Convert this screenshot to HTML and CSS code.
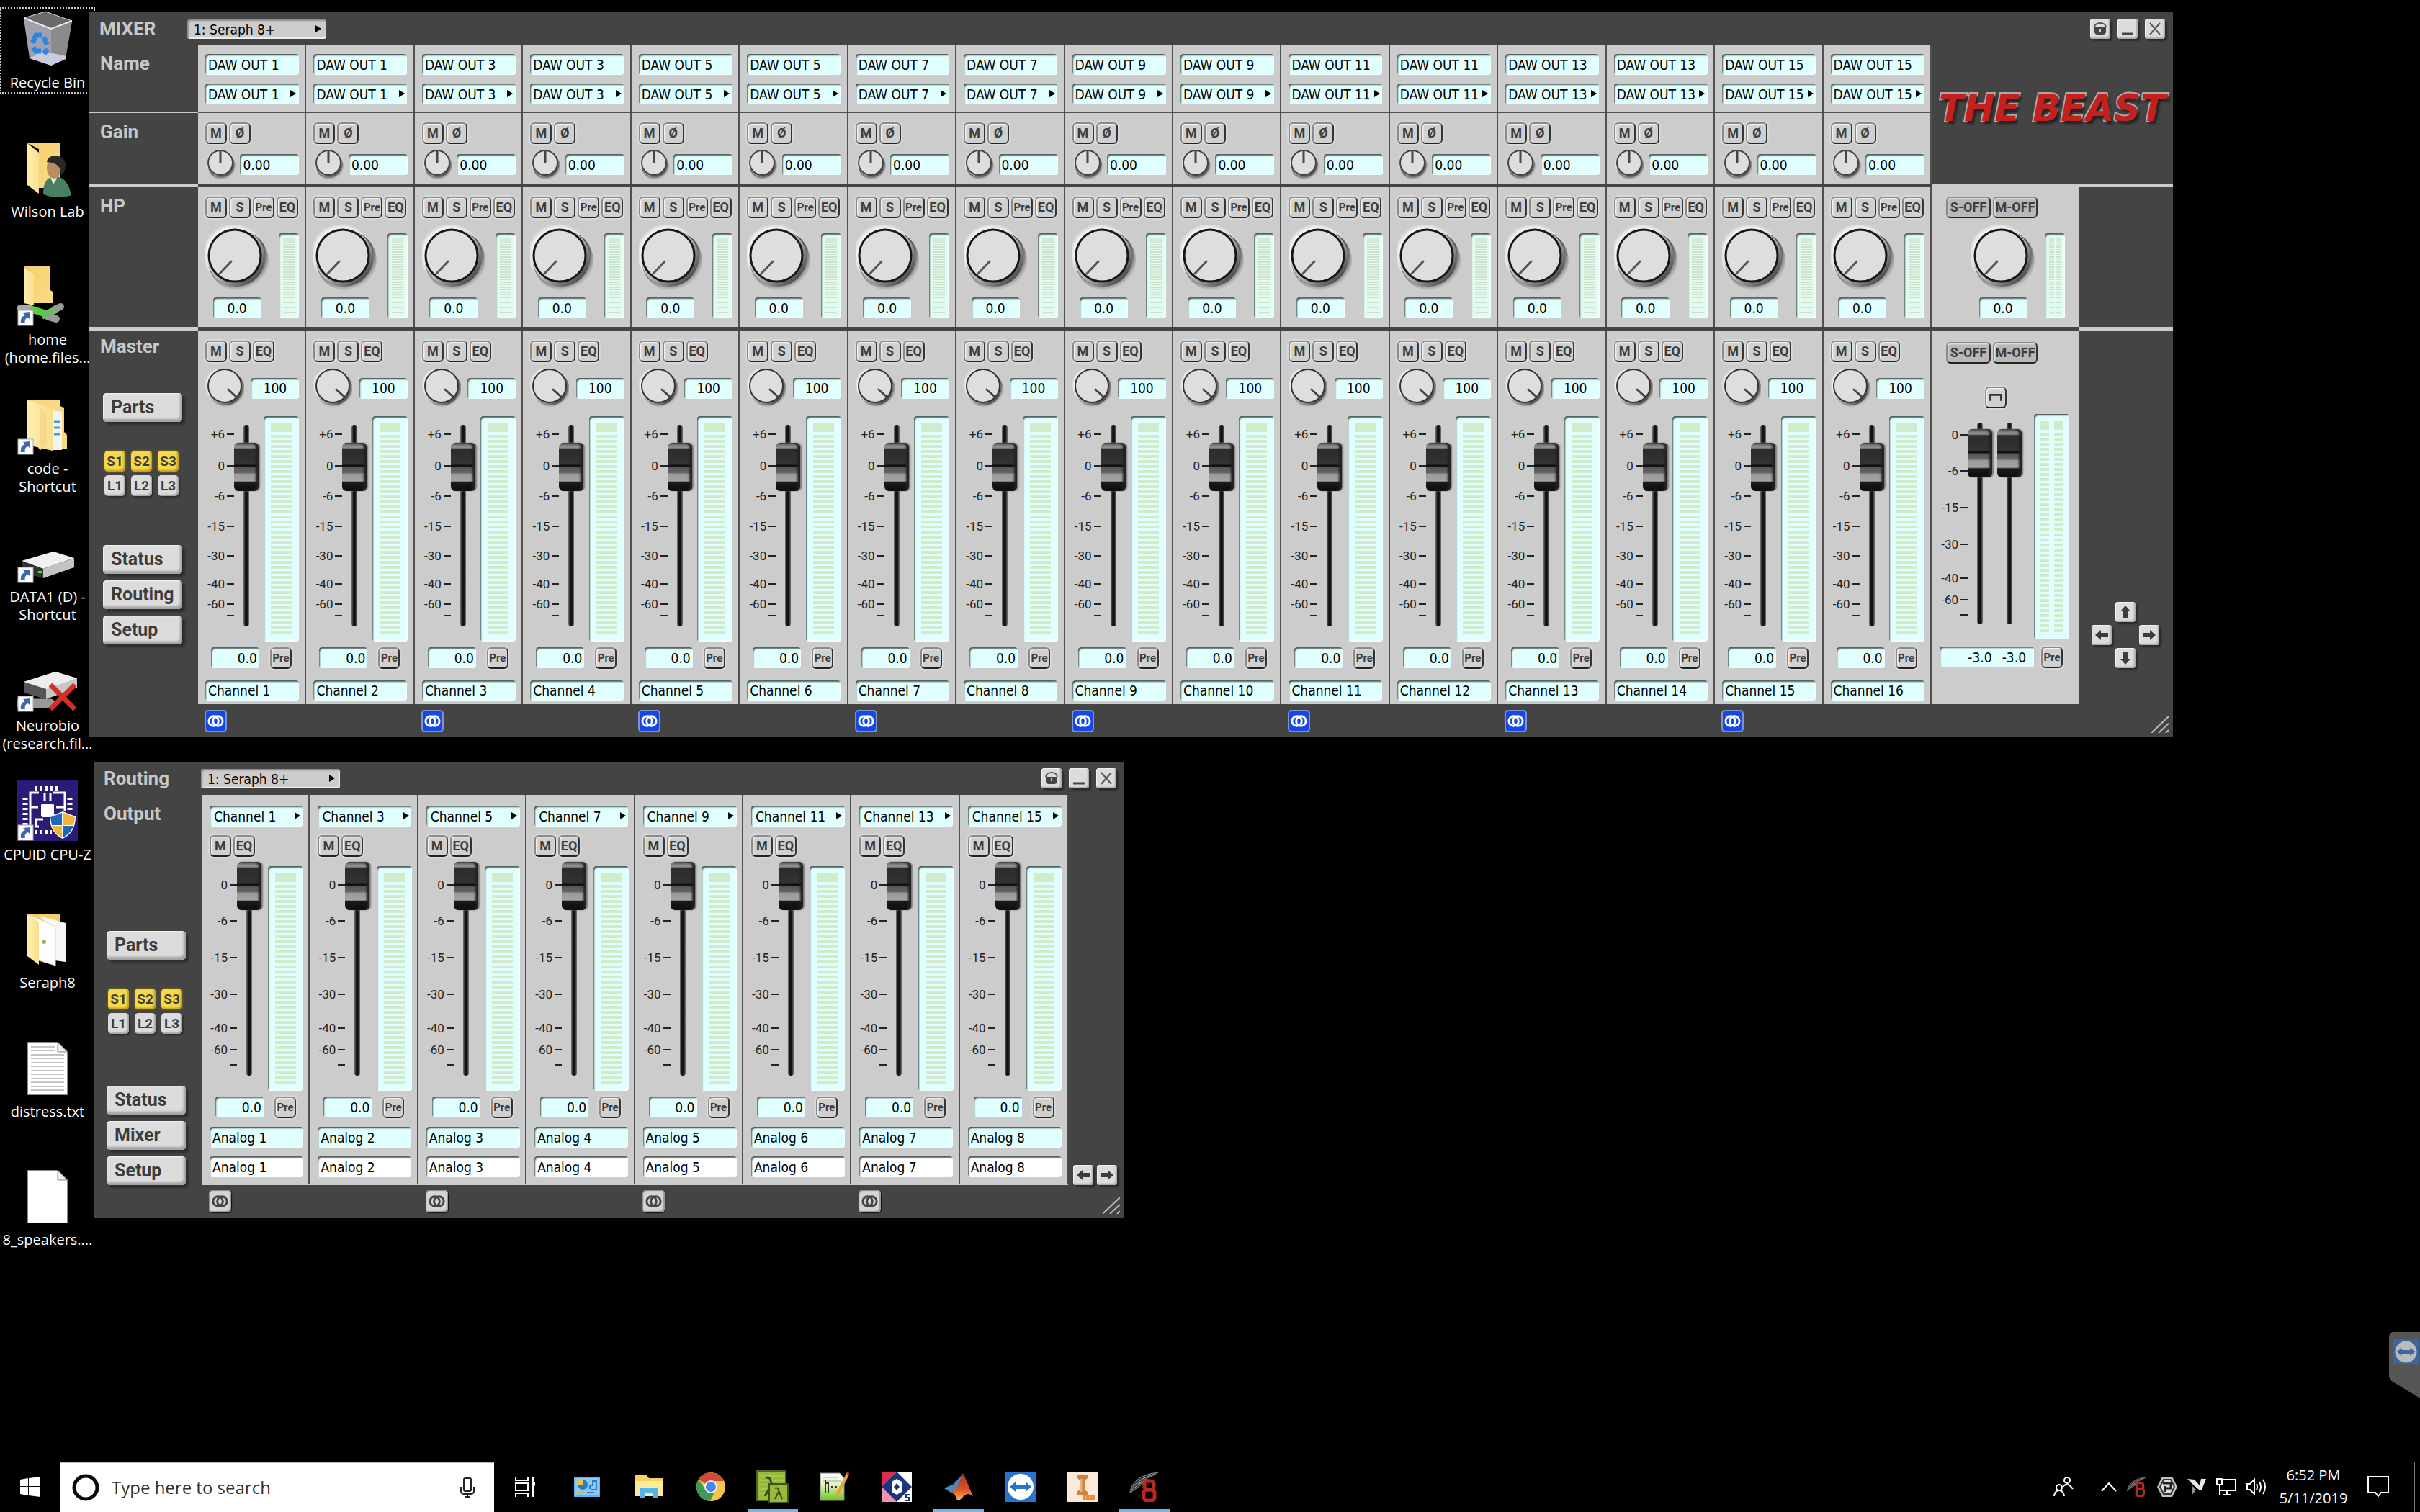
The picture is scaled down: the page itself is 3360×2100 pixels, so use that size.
FILE: index.html
```html
<!DOCTYPE html>
<html lang="en">
<head>
<meta charset="utf-8">
<title>Desktop</title>
<link rel="stylesheet" href="styles.css">
</head>
<body>
<svg class="defs" aria-hidden="true">
  <defs>
    <radialGradient id="gShade" cx=".45" cy=".4" r=".6"><stop offset=".75" stop-color="#333"/><stop offset="1" stop-color="#888" stop-opacity="0"/></radialGradient>
    <radialGradient id="gGlow"><stop offset=".85" stop-color="#f4f4f4"/><stop offset="1" stop-color="#f4f4f4" stop-opacity="0"/></radialGradient>
    <linearGradient id="gRim" x2="1" y2="1"><stop offset="0" stop-color="#eee"/><stop offset=".5" stop-color="#bbb"/><stop offset="1" stop-color="#222"/></linearGradient>
    <linearGradient id="gFold" x2="1"><stop offset="0" stop-color="#fdeeb0"/><stop offset="1" stop-color="#fbe08c"/></linearGradient>
    <linearGradient id="gBack" x2="1" y2="1"><stop offset="0" stop-color="#f3cf6c"/><stop offset="1" stop-color="#fbdc85"/></linearGradient>
    <linearGradient id="gMat" x2="0" y2="1"><stop offset="0" stop-color="#b03018"/><stop offset=".6" stop-color="#d9542a"/><stop offset="1" stop-color="#fbb45c"/></linearGradient>
    <linearGradient id="gGreen" x2="0" y2="1"><stop offset="0" stop-color="#fff"/><stop offset=".4" stop-color="#e4f5c0"/><stop offset="1" stop-color="#6cc41e"/></linearGradient>
  </defs>
  <symbol id="knob-l" viewBox="0 0 88 94">
    <circle cx="39" cy="40" r="43" fill="url(#gGlow)"/><circle cx="46" cy="49" r="42" fill="url(#gShade)"/>
    <circle cx="43" cy="45" r="40" fill="url(#gRim)"/><circle cx="41" cy="42" r="36" fill="#dedede" stroke="#161616" stroke-width="3"/>
    <path d="M36 50L20 67" stroke="#555" stroke-width="3" stroke-linecap="round"/>
  </symbol>
  <symbol id="knob-m" viewBox="0 0 54 54">
    <circle cx="25" cy="23" r="26" fill="url(#gGlow)"/><circle cx="30" cy="29" r="25" fill="url(#gShade)"/>
    <circle cx="28" cy="27" r="24" fill="url(#gRim)"/><circle cx="27" cy="24" r="23" fill="#dedede" stroke="#333" stroke-width="2"/>
    <path d="M32 29L43 39" stroke="#444" stroke-width="3" stroke-linecap="round"/>
  </symbol>
  <symbol id="knob-s" viewBox="0 0 42 42">
    <circle cx="21" cy="20" r="20" fill="url(#gGlow)"/><circle cx="23" cy="24" r="19" fill="url(#gShade)"/>
    <circle cx="22" cy="21" r="18" fill="url(#gRim)"/><circle cx="21" cy="19" r="17" fill="#dedede" stroke="#444" stroke-width="2"/>
    <path d="M21 3V19" stroke="#444" stroke-width="3"/>
  </symbol>
  <symbol id="i-lock" viewBox="0 0 28 28"><path d="M6 12C6 4 22 4 22 12" fill="none" stroke="#555" stroke-width="2"/><path d="M6 12H22V19Q21 22 18 22H10Q7 22 6 19Z" fill="#444"/><path d="M14 14V18" stroke="#ccc" stroke-width="2"/></symbol>
  <symbol id="i-min" viewBox="0 0 28 28"><path d="M6 21H22" stroke="#444" stroke-width="3"/></symbol>
  <symbol id="i-close" viewBox="0 0 28 28"><path d="M7 6L21 22M21 6L7 22" stroke="#555" stroke-width="2"/></symbol>
  <symbol id="i-arrow" viewBox="0 0 28 28"><path d="M5 14L13 7V11H23V17H13V21Z" fill="#3c3c3c"/></symbol>
  <symbol id="i-link" viewBox="0 0 28 28"><g fill="none" stroke="currentColor" stroke-width="3"><circle cx="11" cy="14" r="7"/><circle cx="17" cy="14" r="7"/></g></symbol>
  <symbol id="i-gang" viewBox="0 0 28 28"><path d="M6 19V10H22V19" fill="none" stroke="#333" stroke-width="3"/></symbol>
  <symbol id="i-grip" viewBox="0 0 24 24"><path d="M0 24L24 1M10 24L24 11M20 24L24 20" stroke="#bbb" stroke-width="2"/></symbol>
  <symbol id="shortcut" viewBox="0 0 84 84"><rect x="1" y="62" width="21" height="21" fill="#fff" stroke="#aaa"/><path d="M5 80C4 73 7 70 11 69L8 66L18 65V75L15 72C11 73 10 76 11 80Z" fill="#3c67a8"/></symbol>
  <symbol id="bin" viewBox="0 0 84 84"><path d="M9 13L39 4L76 17L47 28Z" fill="#6a6a6a" stroke="#ddd"/><path d="M9 14L47 28L47 79L17 69Z" fill="#a0a0b0"/><path d="M76 18L47 28V79L67 70Z" fill="#8b8b8b"/><path d="M17 69L35 59L68 66L67 70L47 79Z" fill="#cbc9dc"/><path d="M9 13L47 28L76 17" fill="none" stroke="#eee" stroke-width="2"/><g fill="none" stroke="#2e86dc" stroke-width="7"><path d="M21 48L26 37L34 37"/><path d="M37 40L41 50"/><path d="M22 54L26 59L33 59"/><path d="M37 63L42 56"/></g></symbol>
  <symbol id="userfolder" viewBox="0 0 84 84"><path d="M14 8H59V70H30V16Z" fill="url(#gBack)"/><path d="M14 8L30 21V78L14 66Z" fill="url(#gFold)"/><path d="M36 78C36 62 42 54 52 54C66 54 72 66 75 80C66 84 44 84 36 78Z" fill="#478060"/><path d="M46 55L51 52L55 57L50 65Z" fill="#eee"/><ellipse cx="51" cy="42" rx="10" ry="15" fill="#b98d63"/><path d="M41 34C42 22 64 22 67 36C67 44 65 50 61 52C61 42 56 35 41 34Z" fill="#2b2826"/></symbol>
  <symbol id="netfolder" viewBox="0 0 84 84"><path d="M9 1H46V34L49 36V52H18V8Z" fill="url(#gBack)"/><path d="M9 1L23 12V55L9 52Z" fill="url(#gFold)"/><path d="M4 59H18" stroke="#aaa" stroke-width="9" stroke-linecap="round"/><path d="M18 60L50 70M34 70L56 60" stroke="#5cc94c" stroke-width="10"/><path d="M43 71L54 74M53 60L60 57" stroke="#999" stroke-width="10" stroke-linecap="round"/></symbol>
  <symbol id="codefolder" viewBox="0 0 84 84"><path d="M14 8H59V16L65 18V52L69 56V76H30Z" fill="#f8d880"/><path d="M50 22L62 24V77H50Z" fill="#f3f3f3"/><path d="M51 38H60M51 46H60M51 55H60" stroke="#4a9ad0" stroke-width="3"/><path d="M14 8L49 20V78L14 70Z" fill="url(#gFold)"/><path d="M31 18L41 26V70L31 78Z" fill="#f7d98a"/></symbol>
  <symbol id="drive" viewBox="0 0 84 84"><path d="M6 53L50 40L79 49L36 64Z" fill="#f0f0f0"/><path d="M6 53L36 64V77L6 69Z" fill="#333"/><path d="M36 64L79 49V62L36 77Z" fill="#c4c4c4"/><rect x="29" y="67" width="6" height="3" fill="#4de03c"/></symbol>
  <symbol id="netdrive" viewBox="0 0 84 84"><path d="M4 72H46" stroke="#999" stroke-width="13" stroke-linecap="round"/><path d="M9 42L53 28L83 37V50L40 66L9 56Z" fill="#c8c8c8"/><path d="M9 42L53 28L83 37L40 52Z" fill="#eee"/><path d="M9 42L40 52V66L9 57Z" fill="#555"/><path d="M46 46L80 80M80 46L46 80" stroke="#d32f26" stroke-width="7"/></symbol>
  <symbol id="cpuz" viewBox="0 0 84 84"><rect width="84" height="84" fill="#2a1b74"/><g stroke="#fff" fill="none"><path d="M24 11H60M24 72H48" stroke-width="6" stroke-dasharray="4 3"/><path d="M11 24V66M73 24V42" stroke-width="7" stroke-dasharray="3 4"/><path d="M30 17H18V64M50 17H66V42M18 37H29M54 37H66M38 17V29M46 17V29M30 64H26V54H36" stroke-width="3"/></g><rect x="33" y="32" width="18" height="19" rx="3" fill="#fff"/><path d="M45 50L63 43L81 50C81 66 74 76 63 81C52 76 45 66 45 50Z" fill="#fff"/><path d="M46 51L62 45V62H48ZM64 63H78C75 71 70 76 64 79Z" fill="#2166b8"/><path d="M64 45L80 51L78 62H64ZM48 63H62V79C55 75 50 70 48 63Z" fill="#f0b43c"/></symbol>
  <symbol id="docfolder" viewBox="0 0 84 84"><path d="M14 8H59V30H20Z" fill="#f3cf6c"/><path d="M30 10L67 20V74L52 72V30Z" fill="#f7f7f7"/><path d="M18 9L53 25V79L30 72Z" fill="#fff" stroke="#e5d9a0"/><path d="M14 8L30 18V78L14 66Z" fill="url(#gFold)"/><circle cx="37" cy="46" r="3" fill="#9ab06a"/></symbol>
  <symbol id="blank" viewBox="0 0 84 84"><path d="M14.500 6.500H56L69.500 20V79.500H14.500Z" fill="#fff" stroke="#888"/><path d="M56 6.500V20H69.500Z" fill="#eee" stroke="#888"/></symbol>
  <symbol id="textdoc" viewBox="0 0 84 84"><use href="#blank" width="84" height="84"/><path d="M19 13H53M19 18H53M19 24H65M19 29H65M19 35H65M19 40H65M19 46H65M19 51H65M19 57H65M19 62H65M19 68H65M19 73H65" stroke="#888" stroke-width="1"/></symbol>
  <symbol id="tv" viewBox="0 0 42 42"><rect width="42" height="42" fill="#2a74d0"/><ellipse cx="21" cy="21" rx="18" ry="18" fill="#fff"/><path d="M6 21L14 14V18H28V14L36 21L28 28V24H14V28Z" fill="#2a74d0"/></symbol>
  <symbol id="eight" viewBox="0 0 42 42"><path d="M1 30C2 12 20 3 40 1C30 8 20 10 12 17C16 16 19 15 22 15C14 20 8 24 1 30Z" fill="#3b3b3b" stroke="#8a8a8a"/><path d="M3 26C8 14 22 7 36 3M8 22C12 17 20 13 26 11" stroke="#aaa" fill="none"/><g fill="none" stroke="#b5281f" stroke-width="5"><rect x="21" y="13" width="13" height="12" rx="4"/><rect x="20" y="25" width="15" height="15" rx="4"/></g></symbol>
</svg>

<main class="desktop">
  <ul class="shortcuts" id="shortcuts"></ul>

  <section class="window mixer" aria-label="Mixer">
    <header class="titlebar">
      <h1 class="caption">MIXER</h1>
      <span class="pick device"><select aria-label="Mixer device"><option>1: Seraph 8+</option></select></span>
      <div class="winbtns"></div>
    </header>
    <div class="toprows">
      <div class="band name"><div class="side"><h2>Name</h2></div><div class="strips" id="nameStrips"></div></div>
      <div class="band gain"><div class="side"><h2>Gain</h2></div><div class="strips" id="gainStrips"></div></div>
      <div class="brand"><span>THE BEAST</span></div>
    </div>
    <div class="band hp">
      <div class="side"><h2>HP</h2></div>
      <div class="strips" id="hpStrips"></div>
      <div class="bus">
        <div class="keys"><button class="key wide">S-OFF</button><button class="key wide">M-OFF</button></div>
        <div class="dial bus-dial">
          <div class="dialcol"><svg class="knob-l"><use href="#knob-l"/></svg><input class="field mid" value="0.0" aria-label="HP level"></div>
          <div class="meter fine"><i></i><i></i></div>
        </div>
      </div>
      <div class="tail"></div>
    </div>
    <div class="band master">
      <div class="side"><h2>Master</h2><div class="menu" data-second="Routing"></div></div>
      <div class="strips" id="masterStrips"></div>
      <div class="bus">
        <div class="keys"><button class="key wide">S-OFF</button><button class="key wide">M-OFF</button></div>
        <button class="key gang" aria-label="Gang faders"><svg><use href="#i-gang"/></svg></button>
        <div class="desk">
          <ul class="scale long"><li>0</li><li>-6</li><li>-15</li><li>-30</li><li>-40</li><li>-60</li><li></li></ul>
          <input class="fader" type="range" min="0" max="213" value="204" aria-label="Master left">
          <input class="fader" type="range" min="0" max="213" value="204" aria-label="Master right">
          <div class="meter"><i></i><i></i></div>
        </div>
        <div class="readout"><output class="field pair"><span>-3.0</span><span>-3.0</span></output><button class="key pre">Pre</button></div>
      </div>
      <div class="tail">
        <div class="pad">
          <button class="chip up" aria-label="Up"><svg><use href="#i-arrow"/></svg></button>
          <button class="chip left" aria-label="Left"><svg><use href="#i-arrow"/></svg></button>
          <button class="chip right" aria-label="Right"><svg><use href="#i-arrow"/></svg></button>
          <button class="chip down" aria-label="Down"><svg><use href="#i-arrow"/></svg></button>
        </div>
      </div>
    </div>
    <footer class="foot"><div class="links" data-count="8"></div><svg class="grip"><use href="#i-grip"/></svg></footer>
  </section>

  <section class="window routing" aria-label="Routing">
    <header class="titlebar">
      <h1 class="caption">Routing</h1>
      <span class="pick device"><select aria-label="Routing device"><option>1: Seraph 8+</option></select></span>
      <div class="winbtns"></div>
    </header>
    <div class="band output">
      <div class="side"><h2>Output</h2><div class="menu" data-second="Mixer"></div></div>
      <div class="strips" id="routeStrips"></div>
      <div class="tail">
        <button class="chip left" aria-label="Left"><svg><use href="#i-arrow"/></svg></button>
        <button class="chip right" aria-label="Right"><svg><use href="#i-arrow"/></svg></button>
      </div>
    </div>
    <footer class="foot"><div class="links" data-count="4"></div><svg class="grip"><use href="#i-grip"/></svg></footer>
  </section>

  <aside class="tvtab"><svg><use href="#tv"/></svg></aside>
</main>

<nav class="taskbar" aria-label="Taskbar">
  <button class="start" aria-label="Start"><svg width="28" height="28" viewBox="0 0 28 28" fill="#fff"><path d="M0 4L11 2V13H0ZM12 2L28 0V13H12ZM0 14H11V26L0 24ZM12 14H28V28L12 26Z"/></svg></button>
  <label class="search">
    <svg width="38" height="38" viewBox="0 0 38 38"><circle cx="19" cy="19" r="16" fill="none" stroke="#0a0a0a" stroke-width="5"/></svg>
    <input type="text" placeholder="Type here to search" aria-label="Type here to search">
    <svg width="20" height="28" viewBox="0 0 20 28" fill="none" stroke="#222" stroke-width="2"><rect x="5" y="1" width="10" height="18" rx="2"/><path d="M1 13V19Q1 23 6 23H14Q19 23 19 19V13M10 23V27M6 27H14"/></svg>
  </label>
  <button class="task" aria-label="Task view"><svg width="28" height="28" viewBox="0 0 28 28" fill="none" stroke="#fff" stroke-width="2"><path d="M1 0V5H18V0M1 28V23H18V28M25 0V28"/><rect x="1" y="9" width="17" height="10"/><path d="M23 10H28" stroke-width="5"/></svg></button>
  <button class="task" aria-label="Control Panel"><svg width="36" height="28" viewBox="0 0 36 28"><rect width="36" height="28" fill="#5db4ee"/><rect x="2" y="2" width="32" height="24" fill="#8acbf6"/><circle cx="12" cy="11" r="7" fill="#2b7cc4"/><path d="M12 11V3A8 8 0 0 0 4 11Z" fill="#f5c542"/><path d="M22 17V12H26V6H31V18M23 18H32" stroke="#2b7cc4" stroke-width="2" fill="none"/><path d="M6 22H14" stroke="#e9a92c" stroke-width="2"/><path d="M18 22H28" stroke="#2b7cc4" stroke-width="2"/></svg></button>
  <button class="task" aria-label="File Explorer"><svg width="38" height="32" viewBox="0 0 38 32"><path d="M0 0H16L19 4H38V28H0Z" fill="#f6d264"/><path d="M0 8H38V29H0Z" fill="#fdeb9b"/><path d="M7 31V18H31V31H25V24H13V31Z" fill="#55b5e8"/></svg></button>
  <button class="task" aria-label="Chrome"><svg width="40" height="40" viewBox="0 0 40 40"><circle cx="20" cy="20" r="20" fill="#f5c744"/><path d="M20 20L2.700 10A20 20 0 0 1 38 12L20 12Z" fill="#d2493a"/><path d="M2.700 10A20 20 0 0 0 19 40L27 24L20 28L12 23Z" fill="#3f9a58"/><circle cx="20" cy="20" r="9" fill="#f4f4f4"/><circle cx="20" cy="20" r="7" fill="#4a86ee"/></svg></button>
  <button class="task on" aria-label="Lambda"><svg width="46" height="46" viewBox="0 0 46 46"><rect x="1" y="1" width="40" height="41" fill="#96bb3a" stroke="#55632a" stroke-width="2"/><path d="M4 8H38M4 14H38M4 20H38M4 26H38M4 32H38" stroke="#b8d460"/><path d="M13 11Q19 8 20 15L27 36M21 20L12 36" stroke="#40491f" stroke-width="3" fill="none"/><rect x="18" y="19" width="26" height="26" fill="#96bb3a" stroke="#444c22" stroke-width="2"/><path d="M26 25Q30 23 31 28L36 40M31 30L26 40" stroke="#40491f" stroke-width="2" fill="none"/></svg></button>
  <button class="task" aria-label="Notepad++"><svg width="42" height="42" viewBox="0 0 42 42"><path d="M1 2H28L34 9V40H1Z" fill="url(#gGreen)" stroke="#888"/><path d="M4 8H26M4 13H30" stroke="#aaa"/><path d="M8 12V30M8 16H12V30M16 21H19M21 21H24" stroke="#333" stroke-width="2" fill="none"/><path d="M38 1L41 4L27 32L23 34L23 29Z" fill="#e8a33a"/><path d="M37 3L40 5L41 1Z" fill="#b33"/></svg></button>
  <button class="task" aria-label="Synapse"><svg width="42" height="42" viewBox="0 0 42 42"><rect width="42" height="42" fill="#fff"/><path d="M0 0H21L0 21Z" fill="#d8304c"/><path d="M0 21L21 42H0Z" fill="#ef93b2"/><path d="M21 0L42 21L21 42L0 21Z" fill="#1b3480"/><path d="M21 10L28 14V28L21 32L14 28V14Z" fill="#fff"/><path d="M21 16L25 21L21 26L17 21Z" fill="#1b3480"/><path d="M39 32H34V36H38V40H33" fill="none" stroke="#1b3480" stroke-width="2"/></svg></button>
  <button class="task on" aria-label="MATLAB"><svg width="42" height="40" viewBox="0 0 42 40"><path d="M1 22L14 16L27 2L22 22L10 28Z" fill="#4a87bd"/><path d="M27 1C31 8 35 20 41 33C35 28 31 30 28 33C25 37 22 39 19 39C17 32 15 29 10 28C19 25 22 12 27 1Z" fill="url(#gMat)"/></svg></button>
  <button class="task" aria-label="TeamViewer"><svg width="42" height="42"><use href="#tv"/></svg></button>
  <button class="task" aria-label="Inventor"><svg width="42" height="42" viewBox="0 0 42 42"><rect width="42" height="42" fill="#fbeadb"/><path d="M14 4H28V9L24 12V25L28 28V32H13V28L17 25V12L14 9Z" fill="#c98443"/><path d="M19 10V28" stroke="#e8b27c" stroke-width="3"/><path d="M23 34H27V38H23ZM29 34H32V38H29ZM34 34H37V38H34Z" fill="none" stroke="#ee8a3c" stroke-width="2"/></svg></button>
  <button class="task on" aria-label="Seraph 8"><svg width="42" height="42"><use href="#eight"/></svg></button>

  <div class="tray">
    <svg class="people" width="28" height="28" viewBox="0 0 28 28" fill="none" stroke="#fff" stroke-width="2"><circle cx="19" cy="5" r="4"/><path d="M13 14Q19 6 27 17"/><circle cx="8" cy="15" r="4"/><path d="M1 27Q2 19 8 19T15 27"/></svg>
    <svg width="22" height="14" viewBox="0 0 22 14" fill="none" stroke="#fff" stroke-width="2"><path d="M1 13L11 2L21 13"/></svg>
    <svg width="28" height="28"><use href="#eight"/></svg>
    <svg width="28" height="28" viewBox="0 0 28 28"><path d="M7 0H21L28 14L21 28H7L0 14Z" fill="#c4c4c4"/><path d="M9 4H19L24 14L19 24H9L4 14Z" fill="#ddd" stroke="#333" stroke-width="2"/><path d="M8 9H19V16H11M11 13V21" fill="none" stroke="#222" stroke-width="3"/></svg>
    <svg width="26" height="26" viewBox="0 0 26 26"><path d="M0 2L10 3L17 11L19 2H26L20 17H16L8 10Z" fill="#e4eaee"/><path d="M6 11L12 17L6 25Z" fill="#8a979f"/></svg>
    <svg width="28" height="26" viewBox="0 0 28 26" fill="none" stroke="#fff" stroke-width="2"><path d="M9 3H27V18H6M15 18V23M9 24H21M5 10V24"/><rect x="1" y="2" width="7" height="8"/></svg>
    <svg width="30" height="26" viewBox="0 0 30 26" fill="none" stroke="#fff" stroke-width="2"><path d="M1 9H5L11 3V23L5 17H1ZM14 9Q16 13 14 17M18 6Q22 13 18 20M23 3Q29 13 23 23"/></svg>
    <time class="clock">6:52 PM<br>5/11/2019</time>
    <svg class="notes" width="30" height="30" viewBox="0 0 30 30" fill="none" stroke="#fff" stroke-width="2"><path d="M1 1H29V23H19L15 28L11 23H1Z"/></svg>
  </div>
</nav>
<script src="app.js"></script>
</body>
</html>
```
FILE: styles.css
```css
* { box-sizing: border-box; }
body {
  margin: 0;
  min-height: 100vh;
  display: flex;
  flex-direction: column;
  background: #000;
  overflow: hidden;
  font: 19px/24px "DejaVu Sans Condensed", "DejaVu Sans", sans-serif;
  color: #000;
}
ul { margin: 0; padding: 0; list-style: none; }
h1, h2 { margin: 0; }
svg { display: block; }
button, input, select { font: inherit; color: inherit; margin: 0; }
button { padding: 0; border: 0; background: none; white-space: nowrap; }
.defs { position: absolute; width: 0; height: 0; }
.desktop { position: relative; flex: 1; }

/* Desktop shortcuts */
.shortcuts {
  width: 128px;
  height: 1786px;
  margin-top: 12px;
  margin-left: 2px;
  display: grid;
  grid-template-rows: repeat(10, minmax(0, 1fr));
}
.shortcut {
  display: flex;
  flex-direction: column;
  align-items: center;
  color: #fff;
  text-decoration: none;
  text-align: center;
  white-space: pre;
  font: 20px/25px "Open Sans", "Noto Sans", sans-serif;
}
.shortcut svg { width: 84px; height: 84px; }
.shortcut span { margin-top: 6px; }
.shortcut.focus { outline: 2px dotted #ccc; height: 116px; }

/* Windows */
.window { position: absolute; background: #444; }
.mixer { left: 124px; right: 343px; top: 17px; }
.routing { left: 130px; width: 1431px; top: 1058px; }
.titlebar { height: 46px; display: flex; align-items: center; padding: 0 11px 0 14px; }
.caption, .side h2 {
  font: bold 26px/34px Roboto, "Liberation Sans", sans-serif;
  color: #c8c8c8;
}
.caption { width: 122px; }
.routing .caption { width: 135px; }
.winbtns { margin-left: auto; display: flex; gap: 10px; }
.chip {
  width: 28px;
  height: 28px;
  border-radius: 4px;
  background: #dcdcdc;
  box-shadow: inset -2px -2px 2px #aaa, inset 1px 1px 1px #f2f2f2, 3px 3px 2px #2c2c2c;
}
.chip svg { width: 28px; height: 28px; }
.chip.up svg { transform: rotate(90deg); }
.chip.right svg { transform: rotate(180deg); }
.chip.down svg { transform: rotate(270deg); }

/* Fields */
.field, .pick select {
  display: block;
  width: 130px;
  height: 29px;
  border: 0;
  padding: 1px 0 0 4px;
  border-radius: 4px;
  background: #e0ffff;
  box-shadow: inset 2px 3px 2px -1px #4c5c56, inset -1px -1px 1px #f4ffff;
  outline: 0;
  appearance: none;
}
.pick { display: block; position: relative; }
.pick::after {
  content: "";
  position: absolute;
  right: 4px;
  top: 9px;
  border: 5px solid transparent;
  border-left: 8px solid #000;
  border-right: 0;
}
.device { width: 193px; }
.device select { width: 193px; height: 27px; padding-left: 9px; background: #ccc; box-shadow: inset 2px 2px 2px #8c8c8c, inset -1px -2px 1px #eee; }
.device::after { right: 7px; top: 8px; }
.output .pick select { padding-left: 6px; }
.field.part { width: 82px; }
.field.mid { width: 67px; padding: 0; text-align: center; }
.field.num { width: 67px; padding: 0 3px 0 0; text-align: right; }
.field.white { background: #fff; }
.field.pair { width: 131px; display: flex; justify-content: flex-end; gap: 14px; padding: 3px 11px 0 0; }

/* Bands */
.band { display: grid; grid-template-columns: 151px minmax(0, 1fr) 204px 131px; }
.toprows { display: grid; grid-template-columns: minmax(0, 1fr) 335px; }
.toprows .band { grid-template-columns: 151px minmax(0, 1fr); }
.brand { grid-column: 2; grid-row: 1 / 3; border-bottom: 5px solid #ccc; display: grid; place-items: center; padding-bottom: 16px; }
.brand span {
  font: italic bold 51px/60px "DejaVu Sans", sans-serif;
  white-space: nowrap;
  color: #c4211e;
  -webkit-text-stroke: 4px #aaa;
  paint-order: stroke fill;
  text-shadow: 3px 4px 3px #222;
}
.side { padding-left: 15px; }
.name .side { height: 94px; padding-top: 8px; border-bottom: 2px solid #ccc; }
.gain .side { padding-top: 9px; border-bottom: 5px solid #ccc; }
.hp .side { padding-top: 9px; border-bottom: 6px solid #ccc; }
.master .side { padding-top: 4px; }
.strips { display: grid; grid-template-columns: repeat(16, minmax(0, 1fr)); background: #ccc; }
.routing .strips { grid-template-columns: repeat(8, minmax(0, 1fr)); }
.strip { padding: 0 8px 0 10px; border-right: 2px solid #505050; }
.name .strips { border-bottom: 2px solid #505050; }
.gain .strips { border-bottom: 5px solid #444; }
.hp .strips, .hp .bus { border-bottom: 6px solid #444; }
.hp .tail { border-bottom: 6px solid #ccc; }
.name .strip { display: grid; gap: 12px; align-content: start; padding-top: 12px; }
.gain .strip { height: 98px; padding-top: 13px; }
.hp .strip, .hp .bus { padding-top: 13px; }
.master .strip { height: 518px; padding-top: 13px; }
.bus { background: #ccc; }
.bus .keys { margin-left: 20px; }
.master .bus { padding-top: 15px; }

/* Keys */
.keys { display: flex; gap: 3px; }
.key {
  width: 30px;
  height: 30px;
  border: 2px solid;
  border-color: #8a8a8a #333 #222 #8a8a8a;
  border-radius: 6px;
  background: #d0d0d0;
  box-shadow: inset 1px 1px 2px #fff, 0 0 3px 1px #e4e4e4;
  font: bold 18px/26px Roboto, "Liberation Sans", sans-serif;
  color: #3c3c3c;
  display: grid;
  place-content: center;
}
.key.pre { font-size: 15px; }
.key.wide { width: 62px; background: #b8b8b8; box-shadow: inset 1px 1px 2px #eee; }
.key svg { width: 26px; height: 26px; }
.gang { margin: 32px 0 0 74px; }

/* Knobs and meters */
.pan { display: flex; justify-content: space-between; align-items: center; }
.gain .pan { margin-top: 7px; }
.knob-s { width: 42px; height: 42px; }
.master .pan { margin-top: 9px; height: 54px; }
.knob-m { width: 54px; height: 54px; }
.dial { display: flex; justify-content: space-between; align-items: flex-end; padding-bottom: 12px; margin-top: 10px; }
.dialcol { display: grid; justify-items: center; gap: 6px; width: 84px; }
.knob-l { width: 88px; height: 94px; justify-self: start; }
.bus-dial { justify-content: flex-start; gap: 18px; margin-left: 55px; }
.meter {
  display: flex;
  gap: 7px;
  width: 49px;
  height: 313px;
  margin-left: auto;
  padding: 10px 10px 9px;
  border-radius: 4px;
  background: #e0ffff;
  box-shadow: inset 2px 3px 2px -1px #4c5c56, inset -2px -2px 1px #f0ffff;
}
.meter i {
  flex: 1;
  background:
    linear-gradient(#d2ebca 0 12px, #e0ffff 12px 16px, transparent 16px),
    repeating-linear-gradient(#e0ffff 0 2px, #d2ebca 2px 6px, #e0ffff 6px 7px);
}
.desk .meter:has(i + i) { padding: 10px 8px 9px; }
.meter.fine { width: 28px; height: 118px; padding: 7px 6px 6px; gap: 3px; background: #dffcee; margin-left: 0; }
.meter.fine i {
  background:
    linear-gradient(#d0ebdc 0 6px, #dffcee 6px 8px, transparent 8px),
    repeating-linear-gradient(#dffcee 0 1px, #cfdfcb 1px 2px, #dffcee 2px 4px, #cfdfcb 4px 6px, #dffcee 6px 7px);
}

/* Faders */
.desk { display: flex; align-items: flex-start; margin-top: 12px; }
.scale {
  width: 40px;
  padding-top: 18px;
  display: grid;
  grid-template-rows: 44px 42px 42px 41px 39px 28px 16px 14px;
  font: 17px/14px Roboto, "Liberation Sans", sans-serif;
  color: #222;
}
.scale li { display: flex; justify-content: flex-end; align-items: center; gap: 3px; height: 14px; }
.scale li::after { content: ""; width: 10px; height: 2px; background: #222; }
.scale.long { grid-template-rows: 50px 51px 51px 47px 30px 21px 14px; }
.fader {
  appearance: none;
  writing-mode: vertical-lr;
  direction: rtl;
  width: 34px;
  height: 280px;
  margin-top: 12px;
  background: transparent;
}
.fader::-webkit-slider-runnable-track { width: 8px; height: 100%; border-radius: 4px; background: linear-gradient(90deg, #777, #111 35% 65%, #777); }
.fader::-webkit-slider-thumb {
  appearance: none;
  width: 34px;
  height: 67px;
  margin-left: -13px;
  border-radius: 6px;
  background: linear-gradient(#555 0, #8c8c8c 5px, #8c8c8c 7px, #2c2c2c 9px, #333 30px, #111 31px, #111 33px, #555 34px, #666 42px, #999 43px, #a4a4a4 53px, #1a1a1a 55px, #0c0c0c 100%);
  box-shadow: inset -4px 0 3px #222, 2px 0 2px #777;
}
.bus .desk { margin-top: 8px; }
.bus .scale { width: 50px; padding-top: 22px; }
.bus .fader + .fader { margin-left: 7px; }
.bus .meter { margin-left: 17px; }
.bus .dial .meter { margin-left: 0; }
.readout { display: flex; margin: 8px 0 0 8px; gap: 15px; }
.bus .readout { margin: 10px 0 0 11px; gap: 10px; }
.master .strip > .field { margin-top: 16px; height: 28px; padding-top: 0; }

.output .strip { height: 541px; padding: 15px 7px 0 11px; }
.output .keys { margin-top: 12px; }
.output .desk { margin-top: 7px; height: 318px; }
.output .scale { width: 38px; padding-top: 25px; }
.output .fader { height: 297px; margin-top: 0; }
.output .meter { height: 312px; margin-top: 6px; }
.output .strip > .field { margin-top: 12px; padding-top: 0; }
.output .readout { margin-bottom: 11px; }
.output .side { padding: 9px 0 0 14px; }

/* Sidebar menu */
.menu { display: grid; gap: 9px; margin: 48px 0 0 4px; justify-items: start; }
.menu > button {
  width: 110px;
  height: 40px;
  padding-left: 11px;
  text-align: left;
  border-radius: 5px;
  background: #dcdcdc;
  box-shadow: inset -3px -4px 3px #a4a4a4, inset 1px 1px 2px #f4f4f4, 4px 4px 3px #2e2e2e;
  font: bold 25px/32px Roboto, "Liberation Sans", sans-serif;
  color: #3c3c3c;
}
.presets { display: grid; grid-template-columns: repeat(3, 29px); gap: 5px 8px; margin: 31px 0 59px 2px; }
.presets button {
  height: 29px;
  border-radius: 5px;
  background: #dcdcdc;
  box-shadow: inset -2px -2px 2px #a4a4a4, 2px 2px 2px #2e2e2e;
  font: bold 19px/29px Roboto, "Liberation Sans", sans-serif;
  color: #3c3c3c;
}
.presets .lit { background: #f6d848; box-shadow: inset -2px -2px 3px #b8962a, 0 0 3px 1px #6a5a20; }
.output .menu { margin-top: 146px; }
.output .presets { margin-bottom: 63px; }

/* Tails and footers */
.master .tail { padding: 376px 0 0 18px; }
.pad { display: grid; grid-template-columns: 28px 28px 28px; gap: 4px 5px; }
.pad .up, .pad .down { grid-column: 2; }
.pad .left { grid-column: 1; }
.pad .right { grid-column: 3; }
.routing .band { grid-template-columns: 150px minmax(0, 1fr) 78px; }
.routing .tail { display: flex; align-items: flex-end; gap: 5px; padding-left: 7px; }
.foot { height: 45px; display: grid; grid-template-columns: 151px minmax(0, 1fr) 335px; }
.routing .foot { grid-template-columns: 150px minmax(0, 1fr) 78px; }
.links { grid-column: 2; display: grid; grid-auto-flow: column; grid-auto-columns: minmax(0, 1fr); padding: 8px 0 0 9px; margin-right: -9px; }
.routing .links { padding: 7px 0 0 10px; margin-right: -10px; }
.link {
  width: 31px;
  height: 31px;
  border-radius: 5px;
  padding: 2px;
  background: #d4d4d4;
  color: #444;
  box-shadow: inset 1px 1px 1px #888, inset -2px -2px 1px #999, 1px 1px 1px #111;
}
.link svg { width: 27px; height: 27px; }
.mixer .link { background: #1648e8; color: #fff; box-shadow: inset 0 0 0 2px #7d93cc; }
.grip { width: 24px; height: 24px; justify-self: end; align-self: end; margin: 0 6px 5px 0; }

.tvtab {
  position: absolute;
  right: 0;
  top: 1850px;
  width: 43px;
  height: 92px;
  padding: 10px 0 0 6px;
  background: #555;
  border-radius: 6px 0 0 0;
  clip-path: polygon(0 0, 100% 0, 100% 100%, 8% 74%, 0 68%);
}
.tvtab svg { width: 35px; height: 35px; opacity: .6; }

/* Taskbar */
.taskbar { height: 70px; display: flex; font: 20px/32px "Open Sans", "Noto Sans", sans-serif; color: #fff; }
.start { width: 84px; display: grid; place-items: center; }
.search { width: 602px; display: flex; align-items: center; padding: 0 27px 0 16px; background: #fff; border-top: 2px solid #bbb; }
.search input { flex: 1; border: 0; outline: 0; padding: 0 0 0 17px; font-size: 24px; background: none; }
.search input::placeholder { color: #333; opacity: 1; }
.task { width: 86px; display: grid; place-items: center; border-bottom: 4px solid transparent; border-top: 4px solid transparent; }
.task.on { background: linear-gradient(#7cb4e6, #7cb4e6) bottom / 70px 4px no-repeat border-box; }
.tray { margin-left: auto; display: flex; align-items: center; gap: 14px; margin-right: 7px; padding-right: 35px; border-right: 1px solid #777; }
.people { margin-right: 24px; }
.clock { text-align: center; width: 98px; }
.notes { margin-left: 12px; }
```
FILE: app.js
```js
const fill = (id, count, make) => {
  document.getElementById(id).innerHTML = Array.from({ length: count }, (_, i) => `<div class="strip">${make(i)}</div>`).join("");
};
const key = (t) => `<button class="key${t === "Pre" ? " pre" : ""}">${t}</button>`;
const keys = (...t) => `<div class="keys">${t.map(key).join("")}</div>`;
const field = (value, label, cls = "") => `<input class="field ${cls}" value="${value}" aria-label="${label}">`;
const pick = (value, label) => `<span class="pick"><select aria-label="${label}"><option>${value}</option></select></span>`;
const knob = (size) => `<svg class="knob-${size}"><use href="#knob-${size}"/></svg>`;
const scale = (cls, marks) => `<ul class="scale ${cls}">${marks.map((m) => `<li>${m}</li>`).join("")}</ul>`;
const fader = (value, label) => `<input class="fader" type="range" min="0" max="213" value="${value}" aria-label="${label}">`;

const marks = ["0", "-6", "-15", "-30", "-40", "-60", ""];
const daw = (i) => `DAW OUT ${i - (i % 2) + 1}`;

fill("nameStrips", 16, (i) => field(daw(i), `Name ${i + 1}`) + pick(daw(i), `Source ${i + 1}`));
fill("gainStrips", 16, (i) => keys("M", "Ø") + `<div class="pan">${knob("s")}${field("0.00", `Gain ${i + 1}`, "part")}</div>`);
fill("hpStrips", 16, (i) => keys("M", "S", "Pre", "EQ") +
  `<div class="dial"><div class="dialcol">${knob("l")}${field("0.0", `HP ${i + 1}`, "mid")}</div><div class="meter fine"><i></i></div></div>`);
fill("masterStrips", 16, (i) => keys("M", "S", "EQ") +
  `<div class="pan">${knob("m")}${field("100", `Pan ${i + 1}`, "mid")}</div>` +
  `<div class="desk">${scale("", ["+6", ...marks])}${fader(188, `Fader ${i + 1}`)}<div class="meter"><i></i></div></div>` +
  `<div class="readout">${field("0.0", `Level ${i + 1}`, "num")}${key("Pre")}</div>` +
  field(`Channel ${i + 1}`, `Channel name ${i + 1}`));
fill("routeStrips", 8, (i) => pick(`Channel ${i * 2 + 1}`, `Output ${i + 1}`) + keys("M", "EQ") +
  `<div class="desk">${scale("long", marks)}${fader(213, `Output fader ${i + 1}`)}<div class="meter"><i></i></div></div>` +
  `<div class="readout">${field("0.0", `Output level ${i + 1}`, "num")}${key("Pre")}</div>` +
  field(`Analog ${i + 1}`, `Port ${i + 1}`) + field(`Analog ${i + 1}`, `Port label ${i + 1}`, "white"));

document.querySelectorAll(".menu").forEach((menu) => {
  const preset = (t) => `<button class="${t[0] === "S" ? "lit" : ""}">${t}</button>`;
  menu.innerHTML = `<button>Parts</button><div class="presets">${["S1", "S2", "S3", "L1", "L2", "L3"].map(preset).join("")}</div>` +
    ["Status", menu.dataset.second, "Setup"].map((t) => `<button>${t}</button>`).join("");
});
document.querySelectorAll(".winbtns").forEach((bar) => {
  bar.innerHTML = ["lock", "min", "close"].map((n) => `<button class="chip" aria-label="${n}"><svg><use href="#i-${n}"/></svg></button>`).join("");
});
document.querySelectorAll(".links").forEach((bar) => {
  bar.innerHTML = `<button class="link" aria-label="Link pair"><svg><use href="#i-link"/></svg></button>`.repeat(bar.dataset.count);
});

const shortcuts = [
  ["bin", "Recycle Bin"], ["userfolder", "Wilson Lab"], ["netfolder", "home\n(home.files...", 1],
  ["codefolder", "code -\nShortcut", 1], ["drive", "DATA1 (D) -\nShortcut", 1], ["netdrive", "Neurobio\n(research.fil...", 1],
  ["cpuz", "CPUID CPU-Z", 1], ["docfolder", "Seraph8"], ["textdoc", "distress.txt"], ["blank", "8_speakers...."],
];
document.getElementById("shortcuts").innerHTML = shortcuts.map(([icon, text, link], i) =>
  `<li><a class="shortcut${i ? "" : " focus"}" href="#"><svg><use href="#${icon}"/>${link ? '<use href="#shortcut"/>' : ""}</svg><span>${text}</span></a></li>`).join("");
```
